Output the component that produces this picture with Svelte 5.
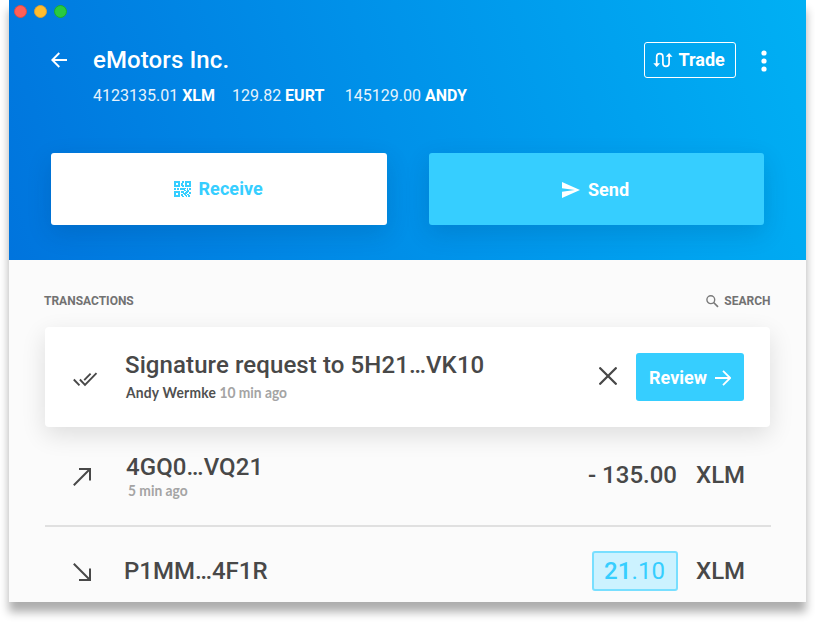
<script>
  const balances = [
    { amount: '4123135.01', asset: 'XLM' },
    { amount: '129.82', asset: 'EURT' },
    { amount: '145129.00', asset: 'ANDY' }
  ];

  // 17x16 modules of the small QR glyph
  const qr = [
    '11111100110111111',
    '11111100110111111',
    '11001101100110011',
    '11001101100110011',
    '11111101110111111',
    '11111100110111111',
    '00000000000000000',
    '11011011111101011',
    '11011011111001011',
    '00000000001101100',
    '11111101110011100',
    '11111101110111011',
    '11001100011110011',
    '11001101101101100',
    '11111101100110110',
    '11111100110010110'
  ];
  const modules = qr.flatMap((row, y) => [...row].map((c, x) => ({ c, x, y })).filter((m) => m.c === '1'));
</script>

<div class="page">
<div class="window">
  <header>
    <div class="lights"><i class="red"></i><i class="yellow"></i><i class="green"></i></div>
    <div class="top">
      <svg class="back" width="16" height="16" viewBox="0 0 16 16"><path d="M16 8H1.500M8.300 1L1.300 8l7 7" fill="none" stroke="#fff" stroke-width="1.9" /></svg>
      <div class="account">
        <h1>eMotors Inc.</h1>
        <div class="balances">
          {#each balances as b}
            <span><span class="amt">{b.amount}</span> <b>{b.asset}</b></span>
          {/each}
        </div>
      </div>
      <button class="trade">
        <svg width="20" height="16" viewBox="0 0 20 16"><path d="M3.700 12V4.800a3.100 3.100 0 0 1 6.200 0V11.300a3.100 3.100 0 0 0 6.200 0V4" fill="none" stroke="#fff" stroke-width="1.7" /><path d="M.3 11.200H7.100L3.700 15ZM12.700 4.800H19.500L16.100 1Z" fill="#fff" /></svg>
        <span>Trade</span>
      </button>
      <svg class="dots" width="6" height="22" viewBox="0 0 6 22" fill="#fff"><circle cx="3" cy="3" r="2.6" /><circle cx="3" cy="11" r="2.6" /><circle cx="3" cy="19" r="2.6" /></svg>
    </div>
    <div class="actions">
      <button class="receive">
        <svg width="17" height="16" viewBox="0 0 17 16" fill="#36ceff">
          {#each modules as m}<rect x={m.x} y={m.y} width="1" height="1" />{/each}
        </svg>
        <span>Receive</span>
      </button>
      <button class="send">
        <svg width="18" height="16" viewBox="0 0 18 16"><path d="M0 16L18 8L0 0V6.200L12.800 8L0 9.800Z" fill="#fff" /></svg>
        <span>Send</span>
      </button>
    </div>
  </header>

  <main>
    <div class="heading">
      <span class="transactions">TRANSACTIONS</span>
      <span class="search">
        <svg width="13" height="13" viewBox="0 0 13 13" fill="none" stroke="#7a7a7a" stroke-width="1.4"><circle cx="4.800" cy="4.700" r="3.900" /><path d="M7.600 7.500L12 11.900" stroke-width="1.700" /></svg>
        <span>SEARCH</span>
      </span>
    </div>

    <section class="card">
      <svg class="icon checks" width="25" height="15" viewBox="0 0 25 15" fill="none" stroke="#484848" stroke-width="1.9"><path d="M.8 7.500L6.500 13.300M6.900 7.500L12 12.800L23.500 1.200M11.200 8.100L17.600 1.600" /></svg>
      <div class="info">
        <h2 class="sig">Signature request to 5H21…VK10</h2>
        <p class="who"><b>Andy Wermke</b> 10 min ago</p>
      </div>
      <svg class="close" width="18" height="18" viewBox="0 0 18 18"><path d="M1.200 1.200L16.800 16.800M16.800 1.200L1.200 16.800" stroke="#484848" stroke-width="2.3" stroke-linecap="round" /></svg>
      <button class="review">
        <span>Review</span>
        <svg width="16" height="16" viewBox="0 0 16 16"><path d="M0 8H15M8 .8L15.200 8l-7.200 7.200" fill="none" stroke="#fff" stroke-width="1.8" /></svg>
      </button>
    </section>

    <section class="row first">
      <svg class="icon out" width="18" height="18" viewBox="0 0 18 18" fill="none" stroke="#484848" stroke-width="2"><path d="M.8 17.200L16.500 1.500M6 1H17V12.500" /></svg>
      <div class="info">
        <h2 class="gq">4GQ0…VQ21</h2>
        <p class="ago">5 min ago</p>
      </div>
      <span class="value">- 135.00</span>
      <span class="unit">XLM</span>
    </section>

    <section class="row second">
      <svg class="icon in" width="18" height="18" viewBox="0 0 18 18" fill="none" stroke="#484848" stroke-width="2"><path d="M.8 .8L16.500 16.500M6 17H17V5.500" /></svg>
      <div class="info"><h2 class="pm">P1MM…4F1R</h2></div>
      <span class="chip"><b>21</b>.10</span>
      <span class="unit">XLM</span>
    </section>
  </main>
</div>
</div>

<style>
  :global(body) { background: #fff; }
  .page { height: 623px; overflow: hidden; padding-left: 9px; box-sizing: border-box; }
  .window, .window * { box-sizing: border-box; }
  .window {
    width: 797px; height: 602px;
    background: #fbfbfb; color: #484848;
    font-family: Roboto, sans-serif;
    box-shadow: 0 10px 9px rgba(0, 0, 0, .32);
  }
  h1, h2, p { margin: 0; white-space: nowrap; }
  span { white-space: nowrap; }
  svg { display: block; flex: none; }
  button { border: 0; margin: 0; padding: 0; font: inherit; color: inherit; display: flex; }

  header {
    height: 260px; color: #fff;
    background: linear-gradient(72deg, #0074dd 0%, #0091e9 48%, #00b0f4 100%);
  }
  .lights { display: flex; gap: 7px; padding: 5px 0 0 5px; height: 42px; }
  .lights i { width: 13px; height: 13px; border-radius: 50%; }
  .red { background: #ff5f57; border: 1px solid #e04c45; }
  .yellow { background: #ffbd2e; border: 1px solid #dea034; }
  .green { background: #28ca42; border: 1px solid #1dad2b; }

  .top { display: flex; height: 111px; align-items: flex-start; padding-right: 39px; }
  .back { margin: 10px 0 0 42px; }
  .account { margin: 4px auto 0 26px; }
  h1 { font-size: 24px; line-height: 28px; font-weight: 500; letter-spacing: .1px; }
  .balances { display: flex; gap: 17px; margin-top: 12px; font-size: 16px; line-height: 20px; }
  .balances > span:last-child { margin-left: 3.500px; }
  .amt { font-weight: 400; opacity: .9; }
  .balances b { font-weight: 700; }
  .trade {
    width: 92px; height: 36px; border: 1px solid #fff; border-radius: 3px;
    background: none; align-items: center; padding-left: 8px; gap: 5.500px;
    font-size: 18px; line-height: 20px; font-weight: 700;
  }
  .dots { margin: 7.500px .5px 0 24.500px; }

  .actions { display: flex; gap: 42px; padding-left: 42px; }
  .actions button {
    height: 72px; border-radius: 3px; align-items: center;
    font-size: 18px; line-height: 20px; font-weight: 700;
    box-shadow: 0 8px 24px rgba(0, 40, 80, .16);
  }
  .receive { width: 336px; background: #fff; color: #36ceff; padding-left: 123px; gap: 7.500px; letter-spacing: .08px; }
  .send { width: 335px; background: #36ceff; color: #fff; padding: 2px 0 0 133px; gap: 8px; }

  .heading {
    display: flex; justify-content: space-between; height: 67px;
    padding: 33px 35.500px 0 35px; font-size: 12px; line-height: 16px; font-weight: 700; color: #727272;
  }
  .search { display: flex; gap: 5.500px; }
  .search svg { margin-top: 2px; }

  .card {
    display: flex; width: 725px; height: 100px; margin-left: 36px;
    background: #fff; border-radius: 4px; align-items: flex-start;
    box-shadow: 0 8px 24px rgba(0, 0, 0, .12);
  }
  h2 { font-size: 24px; line-height: 28px; font-weight: 500; }
  .info { margin-right: auto; }
  .card .info { padding: 24px 0 0 27px; }
  .checks { margin: 45px 0 0 28px; }
  .sig { letter-spacing: .1px; }
  .gq { letter-spacing: .1px; }
  p {
    font-family: Lato, sans-serif; font-size: 15px; line-height: 18px; font-weight: 700; color: #a4a4a4;
    transform: scaleX(.92); transform-origin: left center;
  }
  .who { margin: 4px 0 0 1px; }
  .who b { font-weight: 700; color: #505050; letter-spacing: .25px; }
  .close { margin: 40px 19px 0 0; }
  .review {
    width: 108px; height: 48px; margin: 26px 26px 0 0; border-radius: 3px; background: #36ceff; color: #fff;
    align-items: center; padding: 1px 0 0 13px; gap: 8px; font-size: 18px; line-height: 20px; font-weight: 700;
  }

  .row { display: flex; width: 726px; margin-left: 36px; align-items: flex-start; }
  .first { height: 100px; border-bottom: 2px solid #e0e0e0; }
  .second { height: 75px; }
  .first .icon { margin: 41px 0 0 28px; }
  .second .icon { margin: 36px 0 0 28px; }
  .first .info { padding: 26px 0 0 35px; }
  .second .info { padding: 30px 0 0 33px; }
  .ago { margin: 0 0 0 2px; }
  .value, .unit, .chip { font-size: 24px; line-height: 28px; font-weight: 500; }
  .value { margin-top: 34px; }
  .unit { margin: 34px 26px 0 19px; width: 49px; }
  .second .unit { margin: 30px 26px 0 18px; width: 49px; }
  .chip {
    width: 86px; height: 40px; margin-top: 24px; border: 2px solid #78dfff; border-radius: 3px;
    background: #ccf2ff; color: #36ceff; padding: 4px 0 0 10px; font-weight: 400; letter-spacing: .1px;
  }
  .chip b { font-weight: 500; }
</style>
